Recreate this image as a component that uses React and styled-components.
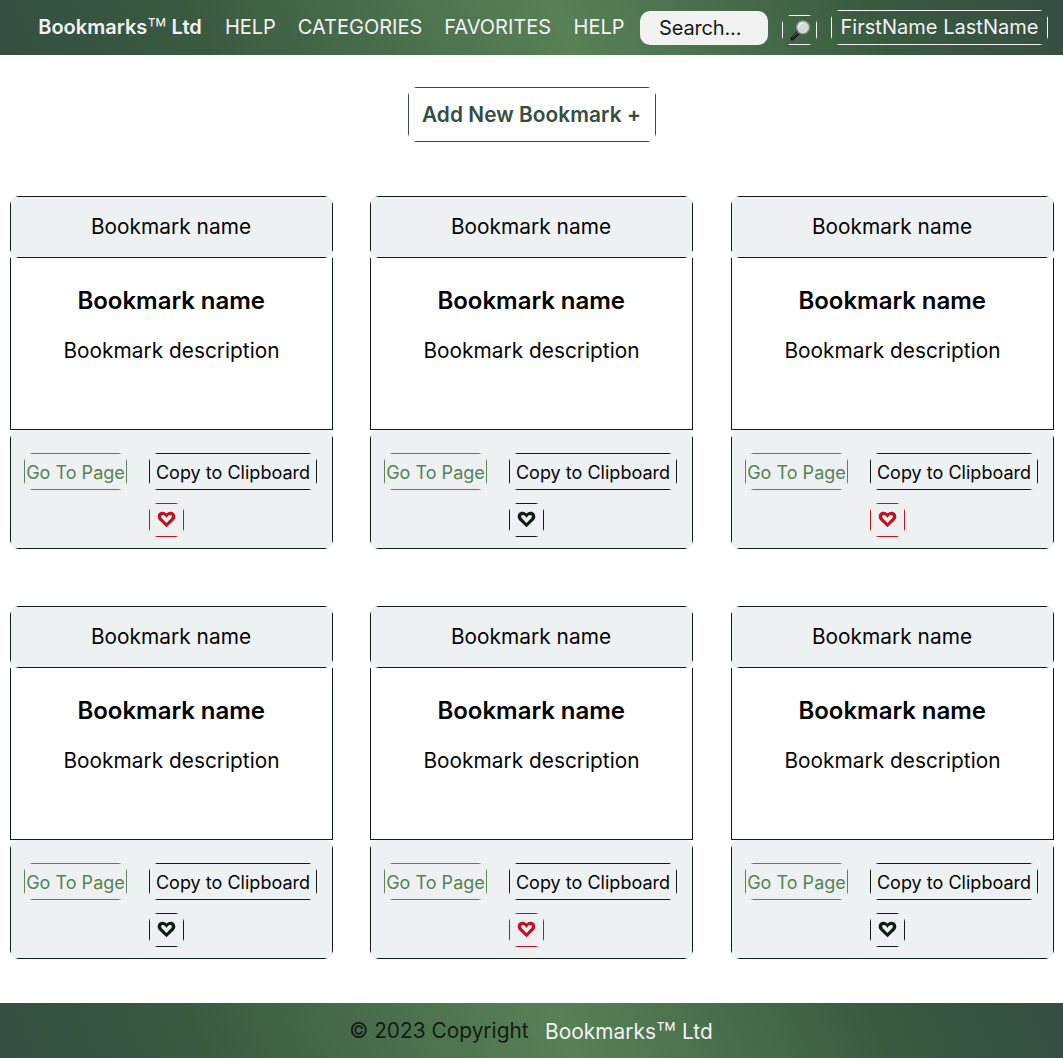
import React from "react";
import styled, { createGlobalStyle, css } from "styled-components";

const colors = {
  pine: "#344e41",
  moss: "#3a5a40",
  fern: "#588157",
  ink: "#121c16",
  light: "#f2f2f2",
  mist: "#edf1f2",
  red: "#c1121f",
};

const GlobalStyle = createGlobalStyle`
  *, *::before, *::after { box-sizing: border-box; }
  body {
    margin: 0;
    background: #fff;
    font-family: Inter, "Liberation Sans", sans-serif;
    color: #050605;
  }
  button { font-family: inherit; color: inherit; margin: 0; padding: 0; border: 0; cursor: pointer; }
`;

/* Four separate edges that stop short of the rounded corners. */
const hLine = (c) =>
  `linear-gradient(90deg, transparent, ${c} 3px, ${c} calc(100% - 3px), transparent)`;
const vLine = (c) =>
  `linear-gradient(180deg, transparent, ${c} 3px, ${c} calc(100% - 3px), transparent)`;

const openCorners = (line, fill = "transparent") => css`
  border-radius: 8px;
  background-color: ${fill};
  background-image: ${hLine(line)}, ${hLine(line)}, ${vLine(line)}, ${vLine(line)};
  background-position: center top, center bottom, left center, right center;
  background-size: calc(100% - 10px) 1px, calc(100% - 10px) 1px,
    1px calc(100% - 10px), 1px calc(100% - 10px);
  background-repeat: no-repeat;
`;

const barBackground = css`
  background: linear-gradient(
    66deg,
    ${colors.pine} 0%,
    ${colors.moss} 19%,
    ${colors.fern} 53%,
    ${colors.moss} 82%,
    ${colors.pine} 100%
  );
`;

const Page = styled.div`
  display: flex;
  flex-direction: column;
  width: 1063px;
  height: 1058px;
`;

const Header = styled.header`
  ${barBackground}
  display: flex;
  height: 55px;
  flex: none;
  padding-left: 37px;
  color: ${colors.light};
`;

const Nav = styled.nav`
  display: flex;
  gap: 20.9px;
  width: 586px;
  height: 54px;
  font-size: 20px;
  line-height: 54px;
`;

const NavItem = styled.a`
  flex: none;
  width: ${(p) => p.$width}px;
  padding-left: 1px;
  text-align: center;
  white-space: nowrap;
`;

const Brand = styled(NavItem)`
  padding-left: 0;
  font-weight: 600;
`;

const Trademark = styled.span`
  font-size: 1.6em;
  font-weight: 300;
  line-height: 0;
  vertical-align: -0.25em;
`;

const SearchBox = styled.div`
  width: 128px;
  height: 34px;
  margin: 11px 0 0 17px;
  padding-left: 19px;
  border-radius: 10px;
  background: ${colors.light};
  color: #151a16;
  font-size: 20px;
  line-height: 34px;
  letter-spacing: -0.15px;
`;

const SearchButton = styled.button`
  ${openCorners(colors.light)}
  width: 35px;
  height: 30px;
  margin: 15px 0 0 14px;
  padding: 4px 0 0 8px;
  display: flex;
`;

const UserButton = styled.button`
  ${openCorners(colors.light)}
  width: 217px;
  height: 35px;
  margin: 10px 0 0 14px;
  padding: 0 0 1px 0;
  font-size: 20px;
  line-height: 34px;
  letter-spacing: 0.03px;
  white-space: nowrap;
`;

const Main = styled.main`
  flex: 1;
  display: flex;
  flex-direction: column;
`;

const AddButton = styled.button`
  ${openCorners(colors.pine)}
  align-self: center;
  width: 248px;
  height: 55px;
  margin-top: 32px;
  color: ${colors.pine};
  font-size: 20.8px;
  font-weight: 600;
  line-height: 55px;
  letter-spacing: 0.08px;
  white-space: nowrap;
`;

const CardGrid = styled.section`
  display: grid;
  grid-template-columns: 360px 361px 323px;
  row-gap: 57px;
  padding: 54px 0 0 10px;
`;

const Card = styled.article`
  width: 323px;
  text-align: center;
`;

const CardHeader = styled.header`
  ${openCorners(colors.ink, colors.mist)}
  height: 62px;
  padding-right: 1px;
  font-size: 20.8px;
  line-height: 61px;
  letter-spacing: 0.05px;
`;

const CardBody = styled.div`
  height: 172px;
  padding-top: 27px;
  border: 1px solid ${colors.ink};
  border-top: 0;
`;

const CardTitle = styled.h2`
  margin: 0;
  padding-right: 0.5px;
  color: #000;
  font-size: 24px;
  font-weight: 600;
  line-height: 31px;
  letter-spacing: -0.04px;
`;

const CardText = styled.p`
  margin: 20px 0 0;
  font-size: 20.8px;
  line-height: 29px;
  letter-spacing: 0.03px;
`;

const CardFooter = styled.footer`
  ${openCorners(colors.ink, colors.mist)}
  background-size: 0 0, calc(100% - 10px) 1px, 1px calc(100% - 10px), 1px calc(100% - 10px);
  display: grid;
  grid-template-columns: 103px 168px;
  grid-template-rows: 37px 34px;
  gap: 13px 22px;
  height: 119px;
  padding: 23px 0 0 14px;
`;

const CardButton = styled.button`
  ${(p) => openCorners(p.$color)}
  padding-top: 2px;
  color: ${(p) => p.$text || p.$color};
  font-size: 18px;
  line-height: 35px;
  letter-spacing: 0.02px;
  white-space: nowrap;
`;

const HeartButton = styled.button`
  ${(p) => openCorners(p.$color)}
  grid-column: 2;
  width: 35px;
  height: 34px;
  padding: 8px 0 0 8px;
  display: flex;
  color: ${(p) => p.$color};
`;

const Footer = styled.footer`
  ${barBackground}
  display: flex;
  justify-content: center;
  flex: none;
  gap: 16.5px;
  height: 55px;
  padding-right: 1px;
  line-height: 55px;
  font-size: 20.8px;
  color: #141c15;
`;

const Copyright = styled.span`
  letter-spacing: 0.04px;
`;

const FooterBrand = styled.a`
  color: ${colors.light};
  line-height: 57px;
  letter-spacing: 0.06px;
`;

const Magnifier = () => (
  <svg width="22" height="22" viewBox="0 0 22 22">
    <path d="M2.2 19.6 L8.4 13.7" stroke="#191b1e" strokeWidth="3.8" strokeLinecap="round" />
    <path d="M3 17.9 L7.2 13.9" stroke="#6c6f75" strokeWidth="0.9" strokeLinecap="round" />
    <path d="M8 14.2 L9.6 12.6" stroke="#8d9490" strokeWidth="2" />
    <circle cx="13" cy="8.3" r="6.5" fill="#d2dcd5" stroke="#86918c" strokeWidth="1.3" />
    <path d="M9.2 7.8 A4 4 0 0 1 13.2 4.2" stroke="#eef3ef" strokeWidth="1.2" fill="none" />
  </svg>
);

const Heart = () => (
  <svg width="19" height="18" viewBox="0 0 19 18">
    <path
      fill="currentColor"
      fillRule="evenodd"
      d="M9.5 16.3 L2.2 9.2 C-0.9 5.6 1.2 0.7 5.3 0.7 C7.2 0.7 8.6 1.5 9.5 2.6 C10.4 1.5 11.8 0.7 13.7 0.7 C17.8 0.7 19.9 5.6 16.8 9.2 Z
         M9.5 11.9 L13.9 7.6 C15.5 5.9 14.9 3.9 13.3 3.9 C11.7 3.9 10.5 5 9.5 7.1 C8.5 5 7.3 3.9 5.7 3.9 C4.1 3.9 3.5 5.9 5.1 7.6 Z"
    />
  </svg>
);

const bookmarks = [true, false, true, false, true, false].map((favorite, id) => ({
  id,
  favorite,
}));

const BrandName = () => (
  <>
    Bookmarks<Trademark>™</Trademark> Ltd
  </>
);

function BookmarkCard({ favorite }) {
  return (
    <Card>
      <CardHeader>Bookmark name</CardHeader>
      <CardBody>
        <CardTitle>Bookmark name</CardTitle>
        <CardText>Bookmark description</CardText>
      </CardBody>
      <CardFooter>
        <CardButton $color={colors.fern}>Go To Page</CardButton>
        <CardButton $color={colors.ink} $text="#050605">
          Copy to Clipboard
        </CardButton>
        <HeartButton $color={favorite ? colors.red : colors.ink} aria-label="Favorite">
          <Heart />
        </HeartButton>
      </CardFooter>
    </Card>
  );
}

export default function App() {
  return (
    <Page>
      <GlobalStyle />
      <Header>
        <Nav>
          <Brand $width={166}>
            <BrandName />
          </Brand>
          <NavItem $width={52}>HELP</NavItem>
          <NavItem $width={125}>CATEGORIES</NavItem>
          <NavItem $width={109}>FAVORITES</NavItem>
          <NavItem $width={49}>HELP</NavItem>
        </Nav>
        <SearchBox>Search...</SearchBox>
        <SearchButton aria-label="Search">
          <Magnifier />
        </SearchButton>
        <UserButton>FirstName LastName</UserButton>
      </Header>
      <Main>
        <AddButton>Add New Bookmark +</AddButton>
        <CardGrid>
          {bookmarks.map((b) => (
            <BookmarkCard key={b.id} favorite={b.favorite} />
          ))}
        </CardGrid>
      </Main>
      <Footer>
        <Copyright>© 2023 Copyright</Copyright>
        <FooterBrand>
          <BrandName />
        </FooterBrand>
      </Footer>
    </Page>
  );
}
